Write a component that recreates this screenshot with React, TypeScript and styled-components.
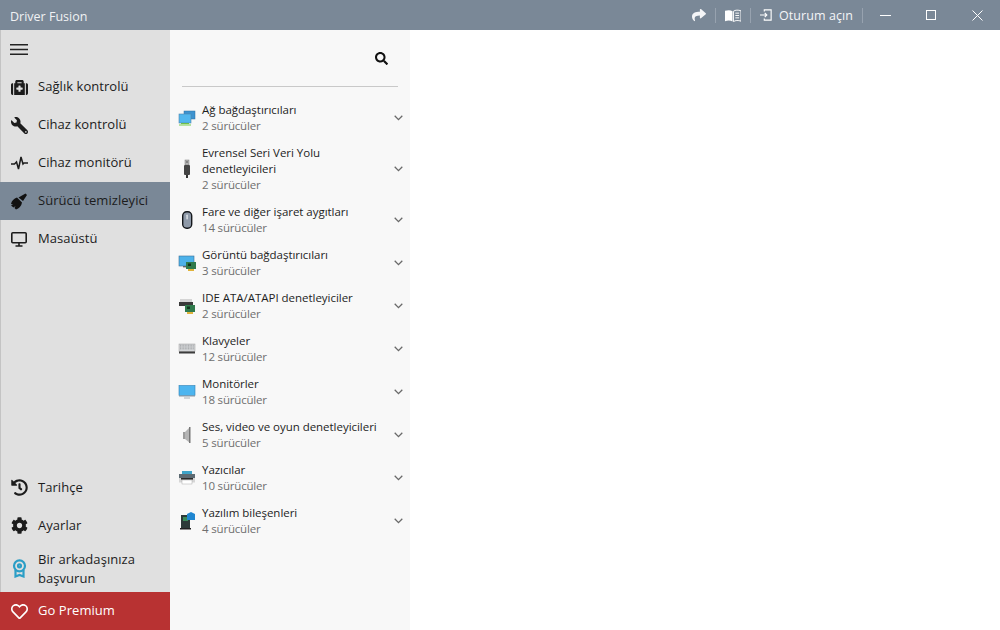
import React from "react";
import styled, { createGlobalStyle } from "styled-components";
import { FaMedkit, FaWrench, FaHistory, FaCog, FaShare, FaSearch, FaRegHeart } from "react-icons/fa";

const Global = createGlobalStyle`
  html, body { margin: 0; padding: 0; height: 100%; background: #fff; }
  #root { height: 630px; }
  * { box-sizing: border-box; }
  body { font-family: "Open Sans", "Noto Sans", sans-serif; }
`;

const Window = styled.div`
  width: 1000px; height: 630px; display: flex; flex-direction: column; overflow: hidden;
`;
const TitleBar = styled.header`
  height: 30px; flex: none; background: #7a8897; color: #fff; display: flex; align-items: center;
  padding-left: 10px; font-size: 12.5px;
`;
const Title = styled.span`flex: 1; color: #f0f2f4; padding-top: 2px;`;
const ToolButton = styled.button`
  border: 0; background: none; color: #f4f5f7; padding: 0; font: inherit; display: flex; align-items: center; gap: 7px;
  font-size: 12.5px; letter-spacing: 0.07px; height: 30px;
`;
const ToolSep = styled.span<{ $left?: number; $right?: number }>`
  width: 1px; height: 15px; background: #97a2af; flex: none;
  margin: 0 ${(p) => p.$right ?? 9}px 0 ${(p) => p.$left ?? 9}px;
`;
const WinButton = styled.button`
  width: 46px; height: 30px; border: 0; background: none; padding: 0; display: flex; align-items: center; justify-content: center; color: #fff;
`;
const Body = styled.div`flex: 1; display: flex; min-height: 0;`;
const Sidebar = styled.nav`
  width: 170px; flex: none; background: #e0e0e0; border-left: 1px solid #c4c4c4; display: flex; flex-direction: column;
`;
const Burger = styled.div`
  height: 38px; display: flex; align-items: center; padding-left: 9px;
`;
const NavItem = styled.div<{ $active?: boolean; $premium?: boolean; $tall?: boolean }>`
  height: ${(p) => (p.$tall ? 48 : 38)}px; display: flex; align-items: center; margin-left: ${(p) => (p.$active || p.$premium ? -1 : 0)}px;
  padding-left: ${(p) => (p.$active || p.$premium ? 10 : 9)}px; flex: none;
  background: ${(p) => (p.$active ? "#7a8897" : p.$premium ? "#b83232" : "transparent")};
  color: ${(p) => (p.$premium ? "#fff" : "#1c1c1c")};
  font-size: 13px; line-height: 19px; letter-spacing: 0.05px;
`;
const NavIcon = styled.span`
  width: 18px; height: 18px; flex: none; margin-right: 10px; display: flex; align-items: center; justify-content: center; font-size: 17px;
`;
const NavLabel = styled.span<{ $up?: boolean; $down?: boolean }>`
  padding-bottom: ${(p) => (p.$up ? 2 : 0)}px;
  padding-top: ${(p) => (p.$down ? 2 : 0)}px;
`;
const Spacer = styled.div`flex: 1;`;
const ListPanel = styled.section`
  width: 240px; flex: none; background: #f8f8f8; display: flex; flex-direction: column;
`;
const SearchRow = styled.div`
  height: 57px; margin: 0 12px; border-bottom: 1px solid #c9c9c9; display: flex; justify-content: flex-end; padding: 22px 10px 0 0; font-size: 13px; color: #111; flex: none;
`;
const List = styled.div`padding-top: 9px; display: flex; flex-direction: column;`;
const Row = styled.div`
  display: flex; align-items: center; padding: 5.5px 7.5px 5.5px 8px;
`;
const RowIcon = styled.span`width: 18px; height: 20px; flex: none; margin-right: 6px; display: flex; align-items: center; justify-content: center;`;
const RowText = styled.div`flex: 1; min-width: 0; max-width: 186px;`;
const RowTitle = styled.div`font-size: 11.5px; line-height: 16px; color: #1e1e1e; letter-spacing: -0.03px;`;
const RowSub = styled.div`font-size: 11.5px; line-height: 16px; color: #6f6f6f; letter-spacing: -0.18px;`;
const Chevron = styled.svg`width: 9px; height: 6px; margin-left: auto; flex: none;`;
const Main = styled.main`flex: 1; background: #fff;`;

const Net = () => (
  <svg width="18" height="18" viewBox="0 0 18 18">
    <rect x="6" y="2" width="11" height="8" fill="#3d93d0" stroke="#2f6f9e" strokeWidth=".5" />
    <rect x="1" y="5" width="12" height="9" fill="#52b7ee" stroke="#4f86ab" strokeWidth=".6" />
    <rect x="3" y="14" width="8" height="1.2" fill="#6fc04a" />
    <rect x="1" y="15.2" width="12" height="1.6" fill="#a6dc8c" />
  </svg>
);
const Usb = () => (
  <svg width="18" height="20" viewBox="0 0 18 20">
    <rect x="7" y="1" width="4" height="5" fill="#b5b5b5" stroke="#777" strokeWidth=".5" />
    <rect x="8" y="2.5" width="2" height="1" fill="#555" />
    <rect x="6" y="6" width="6" height="10" rx="1" fill="#444" />
    <rect x="8" y="16" width="2" height="3" fill="#333" />
  </svg>
);
const Mouse = () => (
  <svg width="18" height="20" viewBox="0 0 18 20">
    <rect x="4.700" y="1.700" width="9" height="16.600" rx="4" fill="#8e99a8" stroke="#15181c" strokeWidth="1.400" />
    <rect x="8.300" y="4.500" width="1.600" height="5" rx=".8" fill="#d8dde3" />
  </svg>
);
const Gpu = () => (
  <svg width="18" height="18" viewBox="0 0 18 18">
    <rect x="1" y="2" width="15" height="10" fill="#4db2ea" stroke="#3b6f96" strokeWidth=".6" />
    <rect x="5" y="12" width="4" height="1.400" fill="#666" />
    <rect x="8" y="8" width="10" height="7" fill="#2f7a4c" />
    <rect x="10" y="9.500" width="3" height="2.500" fill="#14351f" />
    <rect x="10" y="15" width="6" height="2" fill="#e0b23a" />
  </svg>
);
const Ide = () => (
  <svg width="18" height="18" viewBox="0 0 18 18">
    <rect x="2" y="2" width="12" height="3" fill="#d5d5d5" />
    <rect x="1" y="5" width="14" height="4" fill="#3a3a3a" />
    <rect x="7" y="8" width="10" height="7" fill="#2f7a4c" />
    <rect x="9" y="9.500" width="3" height="2.500" fill="#14351f" />
    <rect x="9" y="15" width="6" height="2" fill="#e0b23a" />
  </svg>
);
const Keyboard = () => (
  <svg width="18" height="14" viewBox="0 0 18 14">
    <rect x="1" y="2" width="16" height="7.500" fill="#d4d6d8" stroke="#9a9a9a" strokeWidth=".5" />
    {[3.2, 5, 6.8].map((y) => (
      <line key={y} x1="2" x2="16" y1={y} y2={y} stroke="#8f9296" strokeWidth=".8" strokeDasharray="1 .6" />
    ))}
    <rect x="1" y="9.500" width="16" height="2" fill="#3c3c3c" />
  </svg>
);
const Monitor = () => (
  <svg width="18" height="16" viewBox="0 0 18 16">
    <rect x="1" y="1.500" width="16" height="10" fill="#4db5ef" stroke="#2d7fb4" strokeWidth=".6" />
    <rect x="1" y="11.500" width="16" height="1" fill="#8c98a2" />
    <rect x="6" y="13.500" width="6" height="1" fill="#a8b0b6" />
  </svg>
);
const Speaker = () => (
  <svg width="18" height="20" viewBox="0 0 18 20">
    <rect x="5" y="7" width="3" height="7" fill="#9c9c9c" />
    <polygon points="7,7 12,2 12,18 7,14" fill="#b5b5b5" />
    <rect x="11" y="2" width="1.500" height="16" fill="#777" />
  </svg>
);
const Printer = () => (
  <svg width="18" height="16" viewBox="0 0 18 16">
    <rect x="4" y="1" width="10" height="3" fill="#3ea3c8" />
    <rect x="1" y="4" width="16" height="4" fill="#5d6a72" />
    <rect x="1" y="8" width="16" height="4.500" fill="#d6d6d6" />
    <rect x="3" y="8" width="12" height="1.600" fill="#2a2a2a" />
    <rect x="4" y="10" width="10" height="4" fill="#fff" stroke="#999" strokeWidth=".4" />
  </svg>
);
const Software = () => (
  <svg width="18" height="20" viewBox="0 0 18 20">
    <rect x="3" y="4" width="9" height="13" fill="#2c3a38" />
    <rect x="5" y="6" width="5" height="4" fill="#3b8a5a" />
    <rect x="2" y="17" width="11" height="1.500" fill="#222" />
    <polygon points="9,3 13,1 17,3 17,9 9,9" fill="#1f86d0" />
  </svg>
);

const rows: { icon: React.ReactNode; title: string; sub: string }[] = [
  { icon: <Net />, title: "Ağ bağdaştırıcıları", sub: "2 sürücüler" },
  { icon: <Usb />, title: "Evrensel Seri Veri Yolu denetleyicileri", sub: "2 sürücüler" },
  { icon: <Mouse />, title: "Fare ve diğer işaret aygıtları", sub: "14 sürücüler" },
  { icon: <Gpu />, title: "Görüntü bağdaştırıcıları", sub: "3 sürücüler" },
  { icon: <Ide />, title: "IDE ATA/ATAPI denetleyiciler", sub: "2 sürücüler" },
  { icon: <Keyboard />, title: "Klavyeler", sub: "12 sürücüler" },
  { icon: <Monitor />, title: "Monitörler", sub: "18 sürücüler" },
  { icon: <Speaker />, title: "Ses, video ve oyun denetleyicileri", sub: "5 sürücüler" },
  { icon: <Printer />, title: "Yazıcılar", sub: "10 sürücüler" },
  { icon: <Software />, title: "Yazılım bileşenleri", sub: "4 sürücüler" },
];

export default function App() {
  return (
    <Window>
      <Global />
      <TitleBar>
        <Title>Driver Fusion</Title>
        <ToolButton aria-label="Paylaş"><FaShare size={14} /></ToolButton>
        <ToolSep />
        <ToolButton aria-label="Kılavuz">
          <svg width="16" height="13" viewBox="0 0 17 13">
            <path d="M0 1.500 C3 .5 6 .5 8 2 V13 C6 11.500 3 11.500 0 12.500Z" fill="#fff" />
            <path d="M9 2 C11 .5 14 .5 17 1.500 V12.500 C14 11.500 11 11.500 9 13Z" fill="none" stroke="#fff" />
            <path d="M11 4h4M11 6.500h4M11 9h4" stroke="#fff" />
          </svg>
        </ToolButton>
        <ToolSep />
        <ToolButton>
          <svg width="12" height="14" viewBox="0 0 14 14" fill="none" stroke="#fff" strokeWidth="1.300">
            <path d="M5 3V1h8v12H5v-2" />
            <path d="M0 7h8M5.500 4.500 8 7 5.500 9.500" />
          </svg>
          Oturum açın
        </ToolButton>
        <ToolSep $right={-1} />
        <WinButton aria-label="Simge durumuna küçült">
          <svg width="11" height="1" viewBox="0 0 11 1"><rect width="11" height="1" fill="#fff" /></svg>
        </WinButton>
        <WinButton aria-label="Ekranı kapla">
          <svg width="10" height="10" viewBox="0 0 10 10"><rect x=".5" y=".5" width="9" height="9" fill="none" stroke="#fff" /></svg>
        </WinButton>
        <WinButton aria-label="Kapat">
          <svg width="11" height="11" viewBox="0 0 11 11"><path d="M.5.5l10 10M10.500.5l-10 10" stroke="#fff" /></svg>
        </WinButton>
      </TitleBar>
      <Body>
        <Sidebar>
          <Burger>
            <svg width="18" height="11" viewBox="0 0 18 11"><path d="M0 .75h18M0 5.500h18M0 10.250h18" stroke="#222" strokeWidth="1.400" /></svg>
          </Burger>
          <NavItem><NavIcon><FaMedkit /></NavIcon><NavLabel $up>Sağlık kontrolü</NavLabel></NavItem>
          <NavItem><NavIcon><FaWrench style={{ transform: "scaleX(-1)" }} /></NavIcon><NavLabel $up>Cihaz kontrolü</NavLabel></NavItem>
          <NavItem>
            <NavIcon>
              <svg width="17" height="14" viewBox="0 0 17 14" fill="none" stroke="#1c1c1c" strokeWidth="1.500">
                <path d="M0 8h3.500l2-2 2 7 2.500-12 2 7 1-1H17" />
              </svg>
            </NavIcon>
            <NavLabel $up>Cihaz monitörü</NavLabel>
          </NavItem>
          <NavItem $active>
            <NavIcon>
              <svg width="18" height="17" viewBox="0 0 18 17" fill="#111">
                <path d="M7 4.500 12 9.500C11.500 13 9 15.500 6 16.500L4.500 15 5.500 13 3.500 14.500 1 12.500 3 11.500 1 11C1.500 8 4 5.500 7 4.500Z" />
                <path d="M8.500 4.500 15.500.5 17 2 13 8Z" />
              </svg>
            </NavIcon>
            <NavLabel $up>Sürücü temizleyici</NavLabel>
          </NavItem>
          <NavItem>
            <NavIcon>
              <svg width="16" height="15" viewBox="0 0 16 15" fill="none" stroke="#1c1c1c">
                <rect x=".8" y=".8" width="14.400" height="10" rx="1" strokeWidth="1.600" />
                <path d="M8 11v3M4.500 14h7" strokeWidth="1.600" />
              </svg>
            </NavIcon>
            <NavLabel $up>Masaüstü</NavLabel>
          </NavItem>
          <Spacer />
          <NavItem><NavIcon><FaHistory /></NavIcon><NavLabel>Tarihçe</NavLabel></NavItem>
          <NavItem><NavIcon><FaCog /></NavIcon><NavLabel>Ayarlar</NavLabel></NavItem>
          <NavItem $tall>
            <NavIcon>
              <svg width="15" height="19" viewBox="0 0 15 19" fill="none" stroke="#2b9ec6" strokeWidth="2.200">
                <circle cx="7.500" cy="6.800" r="5.500" />
                <circle cx="7.500" cy="6.800" r="1.500" />
                <path d="M3.500 11v6.500l4-1.500 4 1.500V11" />
              </svg>
            </NavIcon>
            <NavLabel $down>Bir arkadaşınıza<br />başvurun</NavLabel>
          </NavItem>
          <NavItem $premium><NavIcon><FaRegHeart /></NavIcon><NavLabel $up>Go Premium</NavLabel></NavItem>
        </Sidebar>
        <ListPanel>
          <SearchRow><FaSearch /></SearchRow>
          <List>
            {rows.map((r) => (
              <Row key={r.title}>
                <RowIcon>{r.icon}</RowIcon>
                <RowText>
                  <RowTitle>{r.title}</RowTitle>
                  <RowSub>{r.sub}</RowSub>
                </RowText>
                <Chevron viewBox="0 0 9 6"><path d="M.7.8 4.500 4.600 8.300.8" fill="none" stroke="#6a6a6a" strokeWidth="1.300" /></Chevron>
              </Row>
            ))}
          </List>
        </ListPanel>
        <Main />
      </Body>
    </Window>
  );
}
